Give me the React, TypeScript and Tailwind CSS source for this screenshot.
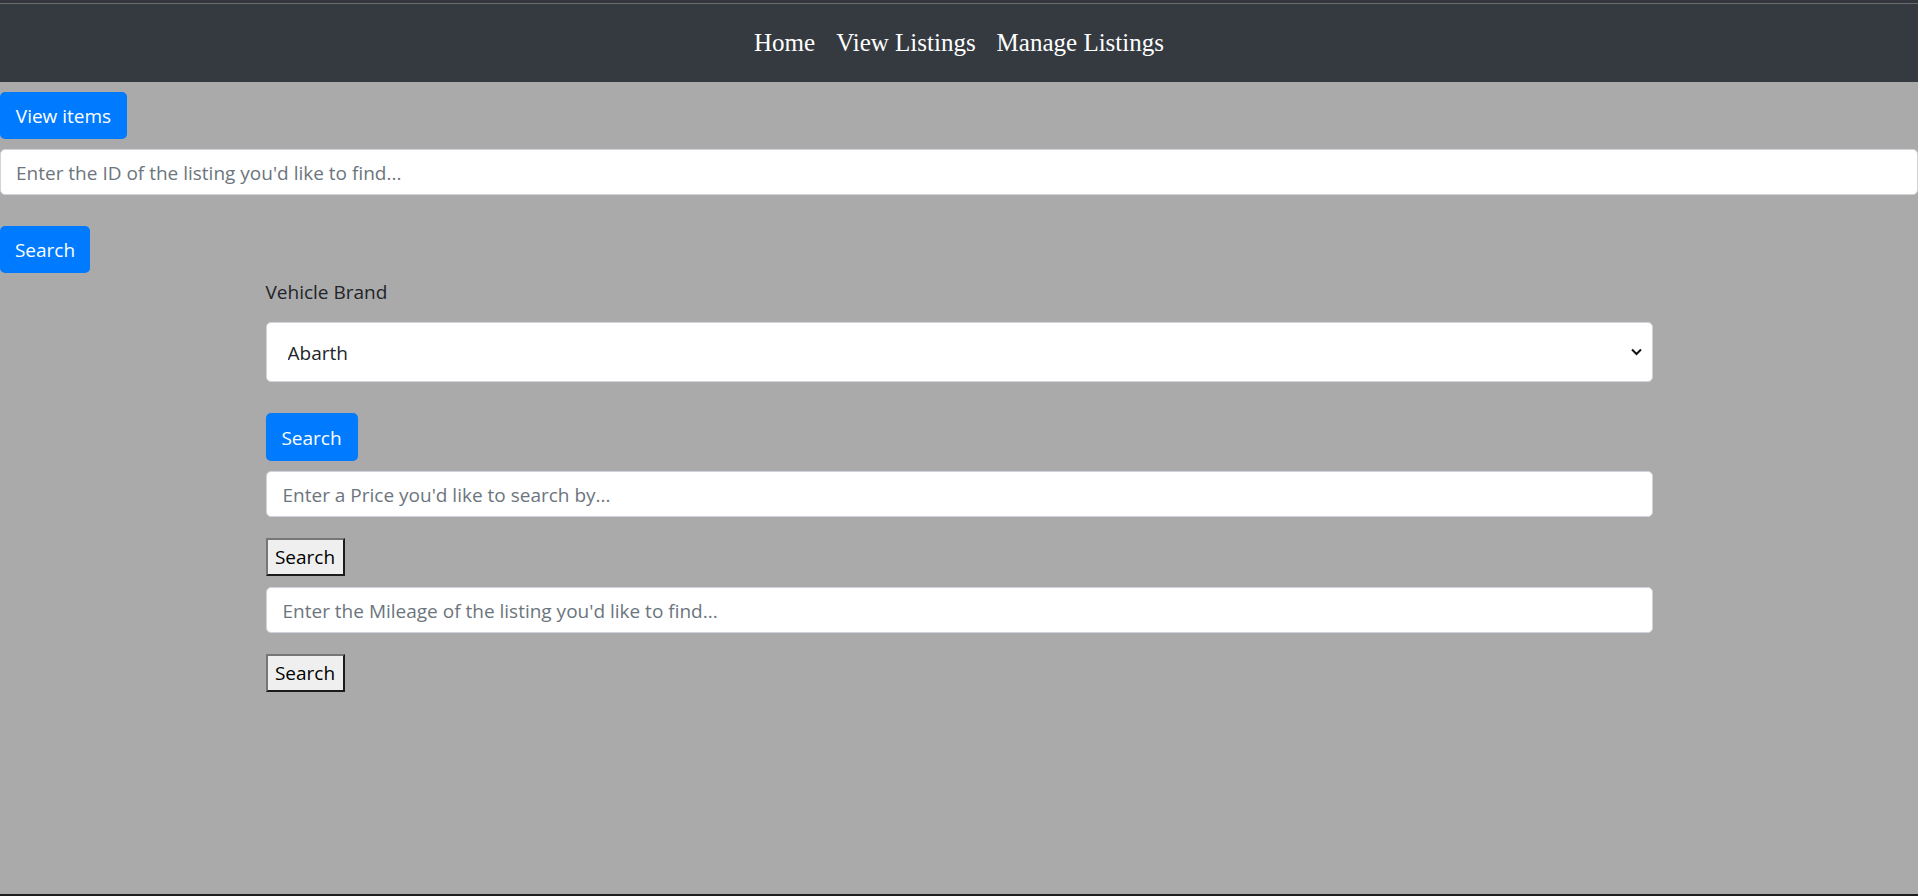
import React from "react";

const sans = "font-['Segoe_UI','Open_Sans','Noto_Sans',sans-serif]";

const links = ["Home", "View Listings", "Manage Listings"];

function BlueButton({ label, width }: { label: string; width: string }) {
  return (
    <button className={`flex h-[47px] ${width} items-center justify-center rounded-[5px] bg-[#007bff] pt-[2px] text-[19px] text-white`}>
      {label}
    </button>
  );
}

function PlainButton() {
  return (
    <button className="flex h-[38px] w-[79px] items-center justify-center border-2 border-t-[#767676] border-l-[#767676] border-r-[#1b1b1b] border-b-[#1b1b1b] bg-[#efefef] pt-[1px] text-[19px] text-black">
      Search
    </button>
  );
}

function TextField({ placeholder, pad }: { placeholder: string; pad: string }) {
  return (
    <input
      placeholder={placeholder}
      className={`h-[46px] w-full rounded-[5px] border border-[#ced4da] bg-white ${pad} pt-[2px] text-[19px] text-[#495057] outline-none placeholder:text-[#6c757d]`}
    />
  );
}

export default function App() {
  return (
    <div className={`flex h-[896px] flex-col overflow-hidden border-b-2 border-[#1e1e1e] bg-[#aaaaaa] ${sans}`}>
      <div className="h-[3px] shrink-0 bg-[#33373d]" />
      <div className="h-px shrink-0 bg-[#6b6b6b]" />
      <nav className="flex h-[78px] shrink-0 items-center justify-center gap-[21px] bg-[#343a40] font-['Liberation_Serif',serif] text-[25px] text-white">
        {links.map((l) => (
          <a key={l} href="#">{l}</a>
        ))}
      </nav>

      <div className="mt-[10px]">
        <BlueButton label="View items" width="w-[127px]" />
      </div>
      <div className="mt-[10px]">
        <TextField placeholder="Enter the ID of the listing you'd like to find..." pad="px-[15px]" />
      </div>
      <div className="mt-[31px]">
        <BlueButton label="Search" width="w-[90px]" />
      </div>

      <div className="mx-auto w-[1425px] px-[19px]">
        <p className="mt-[4px] text-[19px] leading-[30px] text-[#212529]">Vehicle Brand</p>
        <div className="relative mt-[15px]">
          <select className="h-[60px] w-full appearance-none rounded-[5px] border border-[#ced4da] bg-white px-[21px] pt-[2px] text-[19px] text-[#212529] outline-none">
            <option>Abarth</option>
          </select>
          <svg className="pointer-events-none absolute right-[11px] top-[26px]" width="11" height="8" viewBox="0 0 11 8">
            <path d="M1 1.5 L5.5 6 L10 1.5" fill="none" stroke="#111" strokeWidth="2" />
          </svg>
        </div>
        <div className="mt-[31px]">
          <BlueButton label="Search" width="w-[92px] h-[48px]" />
        </div>
        <div className="mt-[10px]">
          <TextField placeholder="Enter a Price you'd like to search by..." pad="px-[16px]" />
        </div>
        <div className="mt-[21px]">
          <PlainButton />
        </div>
        <div className="mt-[11px]">
          <TextField placeholder="Enter the Mileage of the listing you'd like to find..." pad="px-[16px]" />
        </div>
        <div className="mt-[21px]">
          <PlainButton />
        </div>
      </div>
    </div>
  );
}
